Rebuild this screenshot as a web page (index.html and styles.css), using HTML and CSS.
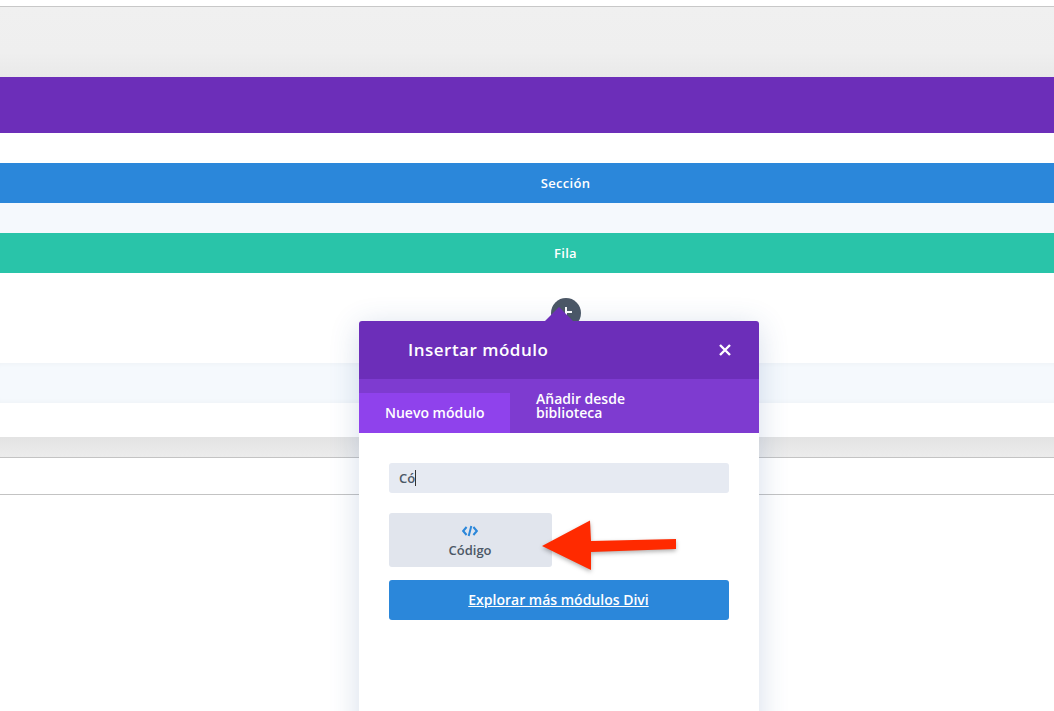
FILE: index.html

```html
<!DOCTYPE html>
<html lang="es">
<head>
    <meta charset="UTF-8">
    <meta name="viewport" content="width=device-width, initial-scale=1.0">
    <title>Insertar módulo</title>
    <link rel="stylesheet" href="styles.css">
</head>
<body>
    <!-- Builder page behind the modal -->
    <main class="page">
        <div class="top-bar"></div>
        <div class="purple-band"></div>
        <div class="gap-30"></div>
        <div class="strip strip-blue">Sección</div>
        <div class="gap-30 gap-light"></div>
        <div class="strip strip-teal">Fila</div>
        <div class="column-area"></div>
        <div class="light-row"></div>
        <div class="gap-34"></div>
        <div class="grey-row"></div>
        <div class="line-row"></div>
    </main>

    <!-- Add button, partly under the modal -->
    <div class="add-btn"><span class="plus"></span></div>

    <!-- Modal -->
    <section class="modal">
        <span class="modal-tip"></span>
        <header class="modal-head">
            <h2>Insertar módulo</h2>
            <svg class="close-icon" width="14" height="14" viewBox="0 0 14 14">
                <path d="M2 2 L12 12 M12 2 L2 12" stroke="#fff" stroke-width="2.4" fill="none"/>
            </svg>
        </header>
        <nav class="tabs">
            <a class="tab tab-active">Nuevo módulo</a>
            <a class="tab">Añadir desde biblioteca</a>
        </nav>
        <div class="modal-body">
            <div class="search-box">Có<span class="caret"></span></div>
            <div class="module-card">
                <svg class="code-icon" width="16" height="12" viewBox="0 0 16 12">
                    <path d="M4.6 2 L1.2 6 L4.6 10 M11.4 2 L14.8 6 L11.4 10 M9.3 1 L6.7 11" stroke="#2b87da" stroke-width="2" fill="none"/>
                </svg>
                <span>Código</span>
            </div>
            <a class="more-btn">Explorar más módulos Divi</a>
        </div>
    </section>

    <!-- Red annotation arrow -->
    <svg class="arrow" width="140" height="56" viewBox="0 0 140 56">
        <path d="M1 26 L49 0.5 L50 21 L135 19 L135 29 L50 32 L50 50 Z" fill="#ff2a00"/>
    </svg>
</body>
</html>
```

FILE: styles.css

```css
/* Reset */
* {
    margin: 0;
    padding: 0;
    box-sizing: border-box;
}

html, body {
    height: 100%;
    overflow: hidden;
}

body {
    font-family: "Open Sans", Arial, sans-serif;
    background: #fff;
    position: relative;
}

/* Page behind the modal */
.page {
    padding-top: 6px;
}

.top-bar {
    height: 71px;
    border-top: 1px solid #c8c8c8;
    background: linear-gradient(to bottom, #f0f0f0 0, #efefef 65%, #e9e9e9 100%);
}

.purple-band {
    height: 56px;
    background: #6c2eb9;
}

.gap-30 {
    height: 30px;
}

.gap-light {
    background: #f5f9fd;
}

.strip {
    height: 40px;
    line-height: 40px;
    padding-left: 77px;
    text-align: center;
    color: #fff;
    font-size: 13px;
    font-weight: 600;
    letter-spacing: 0.3px;
}

.strip-blue {
    background: #2b87da;
}

.strip-teal {
    background: #29c4a9;
}

.column-area {
    height: 90px;
}

.light-row {
    height: 40px;
    background: #f5f9fd;
    box-shadow: inset 0 4px 4px -3px #eef2f6, inset 0 -4px 4px -3px #eef2f6;
}

.gap-34 {
    height: 34px;
}

.grey-row {
    height: 21px;
    background: linear-gradient(to bottom, #e3e3e3, #ececec);
    border-bottom: 1px solid #c3c3c3;
}

.line-row {
    height: 37px;
    border-bottom: 1px solid #c3c3c3;
}

/* Add button */
.add-btn {
    position: absolute;
    top: 298px;
    left: 551px;
    width: 30px;
    height: 30px;
    border-radius: 50%;
    background: #4c5866;
}

.plus {
    position: absolute;
    left: 14px;
    top: 9px;
    width: 2px;
    height: 10px;
    background: #fff;
}

.plus::after {
    content: "";
    position: absolute;
    left: 0;
    top: 4px;
    width: 7px;
    height: 2px;
    background: #fff;
}

/* Modal */
.modal {
    position: absolute;
    top: 321px;
    left: 359px;
    width: 400px;
    height: 420px;
    background: #fff;
    border-radius: 3px 3px 0 0;
    box-shadow: 0 5px 30px rgba(43, 87, 151, 0.2);
}

.modal-tip {
    position: absolute;
    top: -14px;
    left: 186px;
    width: 0;
    height: 0;
    border-left: 14px solid transparent;
    border-right: 14px solid transparent;
    border-bottom: 14px solid #6c2eb9;
}

.modal-head {
    height: 58px;
    background: #6c2eb9;
    border-radius: 3px 3px 0 0;
    display: flex;
    align-items: center;
    justify-content: space-between;
    padding: 0 27px 0 50px;
}

.modal-head h2 {
    color: #fff;
    font-size: 17px;
    line-height: 22px;
    margin-bottom: 1px;
    margin-left: -1px;
    font-weight: 600;
    letter-spacing: 0.5px;
}

.close-icon {
    display: block;
}

.tabs {
    height: 54px;
    background: #7e3bd0;
    display: flex;
    align-items: flex-end;
}

.tab {
    color: #fff;
    font-size: 14px;
    font-weight: 600;
    line-height: 14px;
}

.tab:last-child {
    width: 130px;
    margin-left: 26px;
    padding-bottom: 13px;
}

.tab-active {
    width: 151px;
    height: 40px;
    line-height: 40px;
    padding-left: 26px;
    background: #8f42ec;
}

.modal-body {
    padding: 30px;
}

.search-box {
    height: 30px;
    line-height: 30px;
    padding-left: 10px;
    background: #e6eaf2;
    border-radius: 3px;
    color: #4c5866;
    font-size: 13px;
    font-weight: 600;
    display: flex;
    align-items: center;
}

.caret {
    display: inline-block;
    width: 1px;
    height: 16px;
    background: #333;
}

.module-card {
    width: 163px;
    height: 54px;
    margin-top: 20px;
    background: #e1e5ed;
    border-radius: 3px;
    display: flex;
    flex-direction: column;
    align-items: center;
    padding-top: 12px;
    padding-right: 1px;
    color: #4c5866;
    font-size: 13px;
    font-weight: 600;
}

.code-icon {
    display: block;
    margin-bottom: 4px;
}

.more-btn {
    display: block;
    height: 40px;
    line-height: 40px;
    margin-top: 13px;
    padding-right: 1px;
    background: #2b87da;
    border-radius: 3px;
    text-align: center;
    color: #fff;
    font-size: 14px;
    font-weight: 600;
    text-decoration: underline;
}

/* Annotation */
.arrow {
    position: absolute;
    top: 520px;
    left: 541px;
    filter: drop-shadow(0 2px 2px rgba(0, 0, 0, 0.3));
}
```
